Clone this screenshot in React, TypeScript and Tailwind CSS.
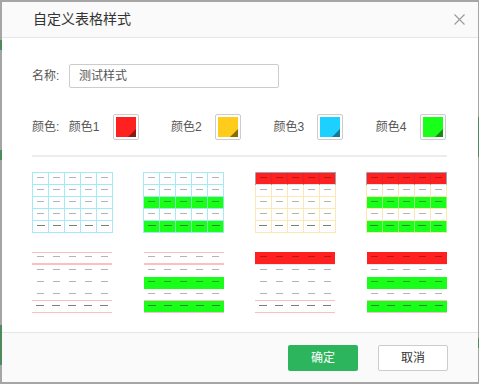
import React from "react";

type Variant = "grid" | "lines";

function Dash({ kind, last }: { kind: "plain" | "green" | "red"; last: boolean }) {
  let cls = "";
  if (kind === "green") cls = last ? "w-[8px] bg-[#1f8a1f]" : "w-[7px] bg-[#2a9e2a]";
  else if (kind === "red") cls = "w-[7px] bg-[#b51a1a]";
  else cls = last ? "w-[8px] bg-[#7f7f7f]" : "w-[7px] bg-[#b3b3b3]";
  return <div className={`h-px ${cls}`} />;
}

function Preview({ variant, header, stripes }: { variant: Variant; header: boolean; stripes: boolean }) {
  const rows = [0, 1, 2, 3, 4];
  const cols = [0, 1, 2, 3, 4];
  if (variant === "grid") {
    const yellow = header;
    return (
      <div
        className={`w-[81px] border-l border-t ${
          yellow ? "border-[#fbe9b4] border-t-[#9ea2b4]" : "border-[#a6e8f8]"
        }`}
      >
        {rows.map((r) => {
          const isHeader = header && r === 0;
          const isGreen = stripes && (r === 2 || r === 4);
          const last = r === 4;
          return (
            <div key={r} className={`flex ${isHeader ? "-ml-px border-l border-[#9ea2b4]" : ""}`}>
              {cols.map((c) => {
                let cell = "";
                if (isHeader) {
                  cell = `bg-[#ff2020] border-b-[#cfe8f2] ${c === 4 ? "border-r-[#9ea2b4]" : "border-r-[#d62a2a]"}`;
                } else if (isGreen) {
                  cell = yellow
                    ? "bg-[#1aff1a] border-r-[#8ef86a] border-b-[#fbe9b4]"
                    : "bg-[#1aff1a] border-r-[#7ef2b4] border-b-[#a6e8f8]";
                } else {
                  cell = yellow ? "bg-white border-[#fbe9b4]" : "bg-white border-[#a6e8f8]";
                }
                return (
                  <div
                    key={c}
                    className={`w-[16px] h-[12px] border-r border-b flex justify-center pt-[4px] ${cell}`}
                  >
                    <Dash kind={isHeader ? "red" : isGreen ? "green" : "plain"} last={last} />
                  </div>
                );
              })}
            </div>
          );
        })}
      </div>
    );
  }
  return (
    <div className={`w-[80px] ${header ? "" : "border-t border-[#fcc0c0]"}`}>
      {rows.map((r) => {
        const isHeader = header && r === 0;
        const isGreen = stripes && (r === 2 || r === 4);
        const last = r === 4;
        let rowCls = "h-[12px] ";
        if (r === 0) {
          rowCls = isHeader
            ? "h-[13px] border-b border-[#d2eef6] bg-[#ff2020]"
            : "h-[12px] border-b-2 border-[#fcc0c0]";
        } else if (r === 3 || r === 4) {
          rowCls = "h-[12px] border-b border-[#fcc0c0]";
        } else {
          rowCls = "h-[12px] border-b border-transparent";
        }
        if (isGreen) rowCls += " bg-[#1aff1a]";
        if (isGreen && r === 3) rowCls += "";
        return (
          <div key={r} className={`flex ${rowCls}`}>
            {cols.map((c) => (
              <div key={c} className={`w-[16px] flex justify-center ${r === 0 && !isHeader ? "pt-[3px]" : "pt-[4px]"}`}>
                <Dash kind={isHeader ? "red" : isGreen ? "green" : "plain"} last={last} />
              </div>
            ))}
          </div>
        );
      })}
    </div>
  );
}

function Swatch({ color, dark }: { color: string; dark: string }) {
  return (
    <div className="w-[26px] h-[26px] border border-[#cccccc] rounded-[2px] bg-white p-[2px]">
      <div className={`relative w-full h-full overflow-hidden ${color}`}>
        <div
          className={`absolute right-0 bottom-0 w-0 h-0 border-l-[8px] border-l-transparent border-b-[8px] ${dark}`}
        />
      </div>
    </div>
  );
}

export default function App() {
  const swatches = [
    { label: "颜色1", color: "bg-[#ff2020]", dark: "border-b-[#8c1818]" },
    { label: "颜色2", color: "bg-[#ffcc1c]", dark: "border-b-[#8a6c00]" },
    { label: "颜色3", color: "bg-[#1cd0ff]", dark: "border-b-[#1a7896]" },
    { label: "颜色4", color: "bg-[#1aff1a]", dark: "border-b-[#198a19]" },
  ];
  return (
    <div className="relative w-[479px] h-[384px] overflow-hidden bg-[#a5a5a5] pt-[2px] pl-[2px] pr-[1px] pb-[2px] font-['Liberation_Sans','Noto_Sans_CJK_SC',sans-serif]">
      <div className="absolute left-0 top-[40px] w-[2px] h-[10px] bg-[#4f8a5c]" />
      <div className="absolute left-0 top-[150px] w-[2px] h-[10px] bg-[#4f8a5c]" />
      <div className="absolute left-0 top-[325px] w-[2px] h-[40px] bg-[#4f8a5c]" />
      <div className="absolute right-0 top-[117px] w-[2px] h-[40px] bg-[#4f8a5c]" />
      <div className="absolute right-0 top-[338px] w-[2px] h-[10px] bg-[#4f8a5c]" />
      <div className="relative w-full h-full bg-white flex flex-col">
        <div className="h-[36px] shrink-0 bg-[#fafafa] border-b border-[#e6e6e6] flex items-center justify-between pl-[31px] pr-[13px]">
          <span className="text-[14px] text-[#333333]">自定义表格样式</span>
          <svg width="11" height="11" viewBox="0 0 11 11">
            <path d="M0.5 0.5 L10.5 10.5 M10.5 0.5 L0.5 10.5" stroke="#9a9a9a" strokeWidth="1.1" fill="none" />
          </svg>
        </div>
        <div className="flex-1 pl-[30px] pt-[26px]">
          <div className="flex items-center h-[24px]">
            <span className="w-[37px] text-[12px] text-[#555555]">名称:</span>
            <div className="w-[210px] h-[24px] border border-[#cccccc] rounded-[2px] flex items-center pl-[9px] text-[12px] text-[#555555]">
              测试样式
            </div>
          </div>
          <div className="flex items-center h-[26px] mt-[26px]">
            <span className="w-[37px] text-[12px] text-[#555555]">颜色:</span>
            {swatches.map((s) => (
              <div key={s.label} className="w-[103px] flex items-center">
                <span className="w-[44px] text-[12px] text-[#555555]">{s.label}</span>
                <Swatch color={s.color} dark={s.dark} />
              </div>
            ))}
          </div>
          <div className="w-[415px] h-[2px] bg-[#ececec] mt-[15px]" />
          <div className="w-[415px] mt-[15px] flex flex-col gap-[19px]">
            <div className="flex justify-between items-start">
              <Preview variant="grid" header={false} stripes={false} />
              <Preview variant="grid" header={false} stripes={true} />
              <Preview variant="grid" header={true} stripes={false} />
              <Preview variant="grid" header={true} stripes={true} />
            </div>
            <div className="flex justify-between items-start">
              <Preview variant="lines" header={false} stripes={false} />
              <Preview variant="lines" header={false} stripes={true} />
              <Preview variant="lines" header={true} stripes={false} />
              <Preview variant="lines" header={true} stripes={true} />
            </div>
          </div>
        </div>
        <div className="h-[50px] shrink-0 bg-[#fafafa] border-t border-[#e6e6e6] flex items-center justify-end gap-[20px] pr-[30px]">
          <button className="w-[70px] h-[26px] rounded-[2px] bg-[#2db55d] text-white text-[12px]">确定</button>
          <button className="w-[70px] h-[26px] rounded-[2px] bg-white border border-[#cccccc] text-[#333333] text-[12px]">
            取消
          </button>
        </div>
      </div>
    </div>
  );
}
